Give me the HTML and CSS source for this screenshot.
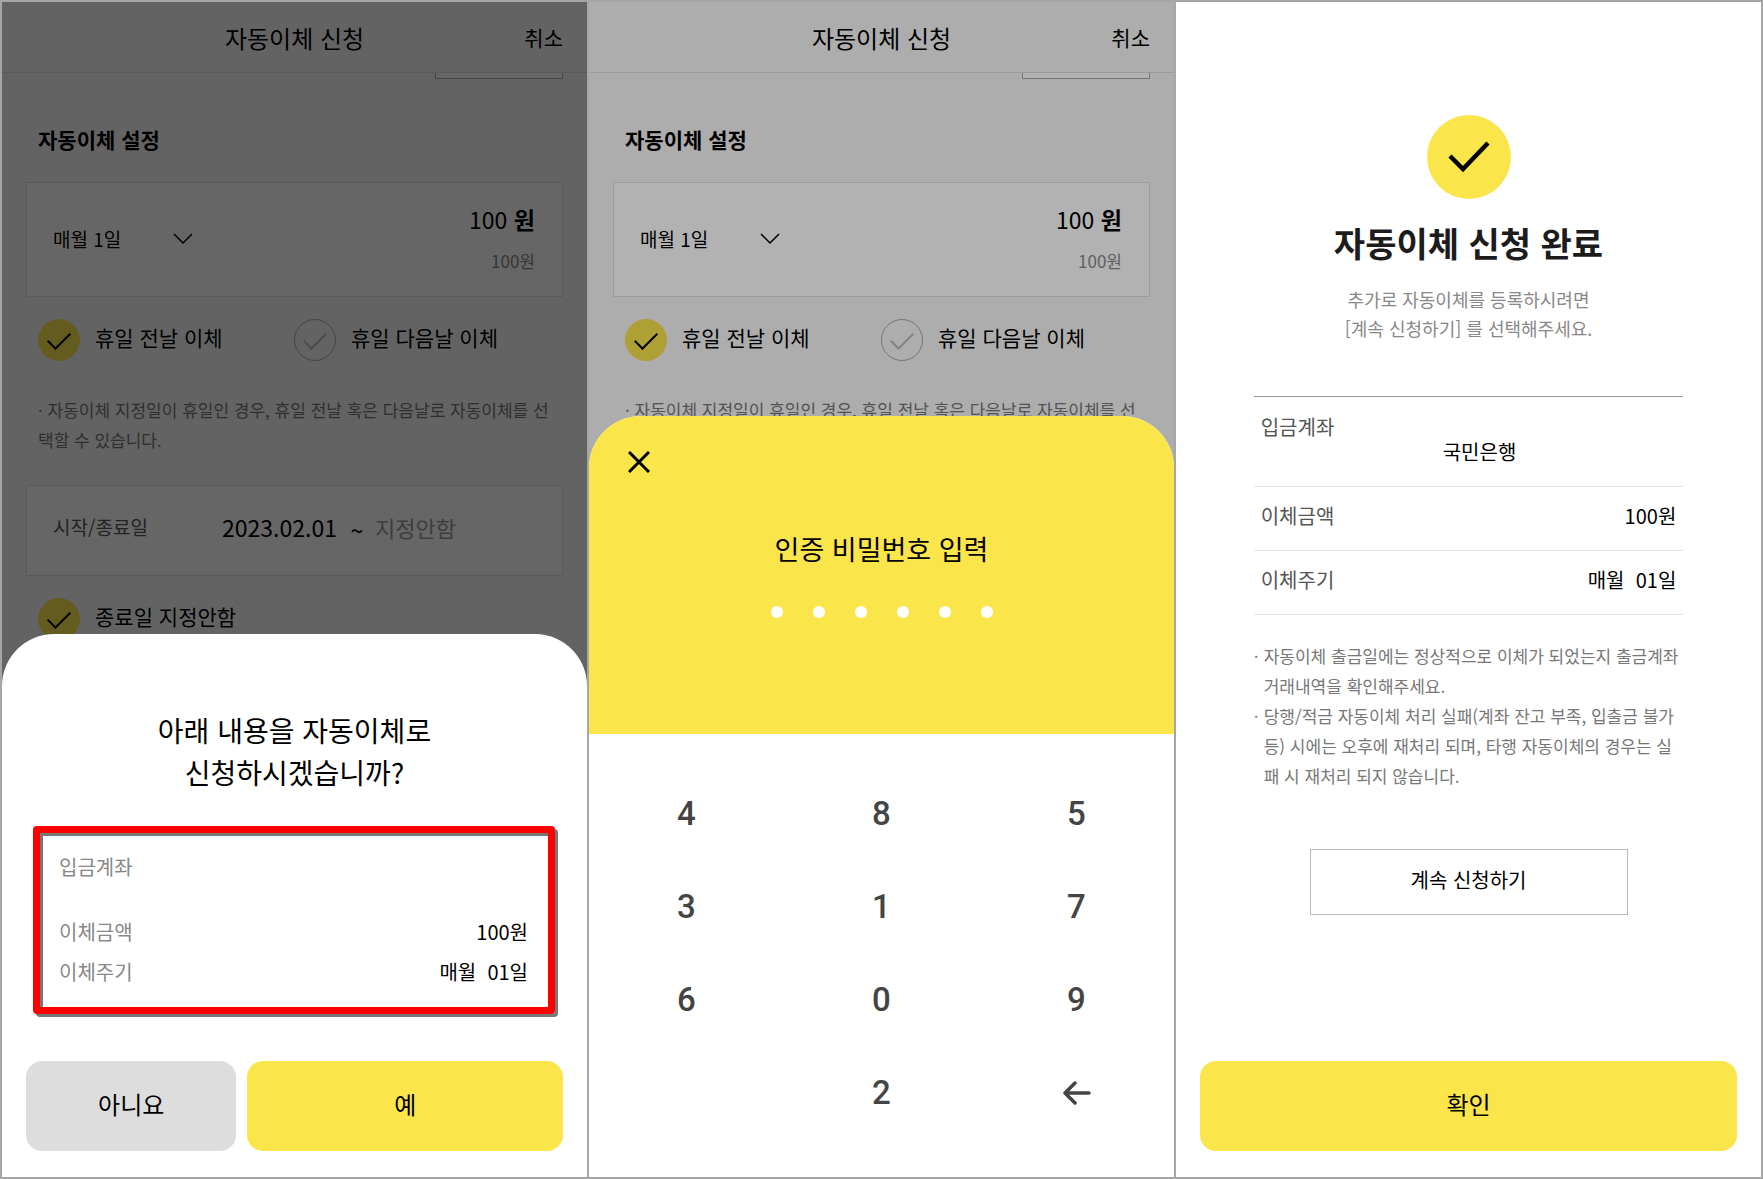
FILE: index.html
```html
<!DOCTYPE html>
<html lang="ko">
<head>
    <meta charset="UTF-8">
    <meta name="viewport" content="width=device-width, initial-scale=1.0">
    <title>자동이체 신청</title>
    <link rel="stylesheet" href="styles.css">
</head>
<body>
    <div class="screens">
        <!-- 신청 내용 확인 -->
        <section class="screen">
            <header class="top-bar">
                <h1>자동이체 신청</h1>
                <a href="#" class="cancel">취소</a>
            </header>
            <form class="transfer-form">
                <div class="scrolled-field"></div>
                <h2>자동이체 설정</h2>
                <div class="box amount-box">
                    <div class="day-select">
                        <select aria-label="이체일">
                            <option>매월 1일</option>
                        </select>
                        <svg width="20" height="12" viewBox="0 0 20 12"><path d="M1 1l9 9 9-9" fill="none" stroke="#000" stroke-width="1.5"/></svg>
                    </div>
                    <div class="amount">
                        <label class="amount-input"><input type="text" value="100" aria-label="이체금액"> <b>원</b></label>
                        <span class="amount-hint">100원</span>
                    </div>
                </div>
                <div class="options">
                    <label class="option"><input type="radio" name="holiday" checked>휴일 전날 이체</label>
                    <label class="option"><input type="radio" name="holiday">휴일 다음날 이체</label>
                </div>
                <p class="note">· 자동이체 지정일이 휴일인 경우, 휴일 전날 혹은 다음날로 자동이체를 선택할 수 있습니다.</p>
                <div class="box date-box">
                    <label for="start-date">시작/종료일</label>
                    <input type="text" id="start-date" value="2023.02.01">
                    <span class="tilde">~</span>
                    <input type="text" class="end-date" placeholder="지정안함" aria-label="종료일">
                </div>
                <div class="options">
                    <label class="option"><input type="checkbox" checked>종료일 지정안함</label>
                </div>
            </form>
            <div class="dim"></div>
            <div class="sheet confirm-sheet">
                <p class="sheet-title">아래 내용을 자동이체로<br>신청하시겠습니까?</p>
                <dl class="summary">
                    <div class="summary-item account">
                        <dt>입금계좌</dt>
                        <dd></dd>
                    </div>
                    <div class="summary-item">
                        <dt>이체금액</dt>
                        <dd>100원</dd>
                    </div>
                    <div class="summary-item">
                        <dt>이체주기</dt>
                        <dd>매월&nbsp; 01일</dd>
                    </div>
                </dl>
                <div class="buttons">
                    <button type="button" class="btn btn-no">아니요</button>
                    <button type="button" class="btn btn-yes">예</button>
                </div>
            </div>
        </section>

        <!-- 비밀번호 입력 -->
        <section class="screen">
            <header class="top-bar">
                <h1>자동이체 신청</h1>
                <a href="#" class="cancel">취소</a>
            </header>
            <form class="transfer-form">
                <div class="scrolled-field"></div>
                <h2>자동이체 설정</h2>
                <div class="box amount-box">
                    <div class="day-select">
                        <select aria-label="이체일">
                            <option>매월 1일</option>
                        </select>
                        <svg width="20" height="12" viewBox="0 0 20 12"><path d="M1 1l9 9 9-9" fill="none" stroke="#000" stroke-width="1.5"/></svg>
                    </div>
                    <div class="amount">
                        <label class="amount-input"><input type="text" value="100" aria-label="이체금액"> <b>원</b></label>
                        <span class="amount-hint">100원</span>
                    </div>
                </div>
                <div class="options">
                    <label class="option"><input type="radio" name="holiday" checked>휴일 전날 이체</label>
                    <label class="option"><input type="radio" name="holiday">휴일 다음날 이체</label>
                </div>
                <p class="note">· 자동이체 지정일이 휴일인 경우, 휴일 전날 혹은 다음날로 자동이체를 선택할 수 있습니다.</p>
            </form>
            <div class="dim dim-light"></div>
            <div class="sheet password-sheet">
                <div class="password">
                    <button type="button" class="close" aria-label="닫기">
                        <svg width="22" height="22" viewBox="0 0 22 22"><path d="M1 1l20 20M21 1L1 21" stroke="#000" stroke-width="3"/></svg>
                    </button>
                    <p class="password-title">인증 비밀번호 입력</p>
                    <div class="dots">
                        <i></i><i></i><i></i><i></i><i></i><i></i>
                    </div>
                </div>
                <div class="keypad">
                    <button type="button">4</button>
                    <button type="button">8</button>
                    <button type="button">5</button>
                    <button type="button">3</button>
                    <button type="button">1</button>
                    <button type="button">7</button>
                    <button type="button">6</button>
                    <button type="button">0</button>
                    <button type="button">9</button>
                    <span></span>
                    <button type="button">2</button>
                    <button type="button" aria-label="지우기">
                        <svg width="28" height="24" viewBox="0 0 28 24"><path d="M26 12H3M12 2L2 12l10 10" fill="none" stroke="#444" stroke-width="3.5" stroke-linecap="round" stroke-linejoin="round"/></svg>
                    </button>
                </div>
            </div>
        </section>

        <!-- 신청 완료 -->
        <section class="screen done">
            <svg class="done-icon" width="84" height="84" viewBox="0 0 84 84">
                <circle cx="42" cy="42" r="42" fill="#fae54b"/>
                <path d="M23 41l13 13 25-26" fill="none" stroke="#000" stroke-width="4.5"/>
            </svg>
            <h2 class="done-title">자동이체 신청 완료</h2>
            <p class="done-text">추가로 자동이체를 등록하시려면<br>[계속 신청하기] 를 선택해주세요.</p>
            <table class="result">
                <tr class="account">
                    <th scope="row">입금계좌</th>
                    <td>국민은행</td>
                </tr>
                <tr>
                    <th scope="row">이체금액</th>
                    <td>100원</td>
                </tr>
                <tr>
                    <th scope="row">이체주기</th>
                    <td>매월&nbsp; 01일</td>
                </tr>
            </table>
            <ul class="guide">
                <li>자동이체 출금일에는 정상적으로 이체가 되었는지 출금계좌 거래내역을 확인해주세요.</li>
                <li>당행/적금 자동이체 처리 실패(계좌 잔고 부족, 입출금 불가 등) 시에는 오후에 재처리 되며, 타행 자동이체의 경우는 실패 시 재처리 되지 않습니다.</li>
            </ul>
            <button type="button" class="more">계속 신청하기</button>
            <button type="button" class="btn btn-yes btn-confirm">확인</button>
        </section>
    </div>
</body>
</html>
```

FILE: styles.css
```css
* {
    box-sizing: border-box;
}

body {
    margin: 0;
    font-family: 'Noto Sans CJK KR', sans-serif;
    font-size: 20px;
    color: #000;
    background: #a6a6a6;
}

h1, h2, p, dl, dd, ul {
    margin: 0;
    padding: 0;
}

button, input, select {
    font: inherit;
    color: inherit;
    padding: 0;
    border: none;
    background: none;
}

.screens {
    display: grid;
    grid-template-columns: repeat(3, 1fr);
    gap: 2px;
    padding: 2px;
    min-height: 100vh;
}

.screen {
    position: relative;
    overflow: hidden;
    background: #f8f8f8;
}

/* 상단바 */
.top-bar {
    display: grid;
    grid-template-columns: 1fr auto 1fr;
    align-items: center;
    height: 71px;
    padding: 0 24px;
    border-bottom: 1px solid #dedede;
}

.top-bar h1 {
    grid-column: 2;
    font-size: 24px;
    font-weight: 400;
}

.cancel {
    justify-self: end;
    font-size: 21px;
    color: #000;
    text-decoration: none;
}

/* 신청 폼 */
.transfer-form {
    padding: 0 24px;
}

.scrolled-field {
    width: 128px;
    height: 6px;
    margin-left: auto;
    background: #fff;
    border: 1px solid #aaa;
    border-top: none;
}

.transfer-form h2 {
    margin: 44px 12px 27px;
    font-size: 21px;
    line-height: 32px;
}

.box {
    display: flex;
    align-items: center;
    padding: 0 27px 0 26px;
    background: #fff;
    border: 1px solid #dedede;
}

.amount-box {
    justify-content: space-between;
    height: 115px;
    padding-bottom: 2px;
}

.day-select {
    display: flex;
    align-items: center;
}

.day-select select {
    width: 120px;
    font-size: 19px;
    appearance: none;
}

.amount {
    text-align: right;
}

.amount-input {
    display: block;
    font-size: 23px;
    line-height: 44px;
}

.amount-input input {
    width: 80px;
    text-align: right;
}

.amount-hint {
    display: block;
    font-size: 17px;
    line-height: 40px;
    color: #888;
}

.options {
    display: grid;
    grid-template-columns: 256px 1fr;
    margin: 22px 12px 0;
}

.option {
    display: flex;
    align-items: flex-start;
    gap: 15px;
    font-size: 21px;
    line-height: 36px;
}

.option input {
    display: flex;
    justify-content: center;
    width: 42px;
    height: 42px;
    margin: 0;
    border: 1px solid #aaa;
    border-radius: 50%;
    appearance: none;
}

.option input::after {
    content: '';
    width: 10px;
    height: 20px;
    margin-top: 7px;
    border: solid #bbb;
    border-width: 0 2px 2px 0;
    transform: rotate(45deg);
}

.option input:checked {
    border-color: #fae54b;
    background: #fae54b;
}

.option input:checked::after {
    border-color: #000;
}

.note {
    margin: 34px 12px 30px;
    font-size: 17px;
    line-height: 30px;
    color: #777;
}

.date-box {
    height: 91px;
    padding-bottom: 8px;
    font-size: 23px;
}

.date-box label {
    width: 169px;
    font-size: 19px;
    color: #555;
}

.date-box input {
    width: 117px;
}

.tilde {
    width: 36px;
    padding-top: 6px;
    text-align: center;
}

.date-box .end-date {
    width: 140px;
    font-size: 22px;
}

.date-box .end-date::placeholder {
    color: #999;
}

/* 하단 시트 */
.dim {
    position: absolute;
    inset: 0;
    background: rgba(0, 0, 0, 0.6);
}

.dim-light {
    background: rgba(0, 0, 0, 0.3);
}

.sheet {
    position: absolute;
    left: 0;
    right: 0;
    bottom: 0;
    overflow: hidden;
    background: #fff;
    border-radius: 52px 52px 0 0;
}

.confirm-sheet {
    padding: 75px 24px 26px;
}

.sheet-title {
    font-size: 28px;
    line-height: 42px;
    text-align: center;
}

.summary {
    margin: 33px 8px 47px 7px;
    padding: 14px 20px 15px 19px;
    border: 7px solid #f00;
    border-radius: 4px;
    box-shadow: 3px 3px 0 #777, inset 3px 3px 0 #777;
}

.summary-item {
    display: flex;
    justify-content: space-between;
    line-height: 40px;
}

.summary-item.account {
    margin-bottom: 25px;
}

.summary-item dt {
    color: #888;
}

.buttons {
    display: grid;
    grid-template-columns: 2fr 3fr;
    gap: 11px;
}

.btn {
    height: 90px;
    padding-bottom: 6px;
    font-size: 24px;
    border-radius: 16px;
    cursor: pointer;
}

.btn-no {
    background: #ddd;
}

.btn-yes {
    background: #fae54b;
}

/* 비밀번호 */
.password {
    height: 318px;
    padding: 35px 39px 0;
    background: #fae54b;
}

.close {
    display: block;
    height: 22px;
}

.close svg,
.keypad svg {
    display: block;
    margin: auto;
}

.password-title {
    margin: 56px 0 37px;
    font-size: 27px;
    line-height: 40px;
    text-align: center;
}

.dots {
    display: flex;
    justify-content: center;
    gap: 30px;
}

.dots i {
    width: 12px;
    height: 12px;
    border-radius: 50%;
    background: #fff;
}

.keypad {
    display: grid;
    grid-template-columns: repeat(3, 1fr);
    grid-auto-rows: 93px;
    padding: 33px 0 38px;
    font-family: Roboto, sans-serif;
    font-size: 33px;
    font-weight: 500;
    color: #444;
}

/* 완료 화면 */
.done {
    display: flex;
    flex-direction: column;
    align-items: center;
    padding: 113px 24px 26px;
    background: #fff;
}

.done-title {
    margin-top: 19px;
    font-size: 34px;
    line-height: 50px;
    color: #1c1c1c;
}

.done-text {
    margin-top: 17px;
    font-size: 18px;
    line-height: 29px;
    color: #888;
    text-align: center;
}

.result {
    width: 80%;
    margin-top: 53px;
    border-collapse: collapse;
    border-top: 1px solid #999;
}

.result tr {
    height: 64px;
    border-bottom: 1px solid #e4e4e4;
}

.result .account {
    height: 90px;
}

.result th {
    width: 44%;
    padding: 0 7px 6px;
    font-weight: 400;
    text-align: left;
    color: #555;
}

.result td {
    padding: 0 7px 6px 0;
    text-align: right;
}

.result .account th {
    padding-bottom: 30px;
}

.result .account td {
    padding: 20px 0 0;
    text-align: left;
}

.guide {
    width: 80%;
    margin-top: 26px;
    font-size: 17px;
    line-height: 30px;
    color: #777;
    list-style: none;
}

.guide li {
    position: relative;
    padding-left: 10px;
}

.guide li::before {
    content: '·';
    position: absolute;
    left: 0;
}

.more {
    width: 318px;
    height: 66px;
    margin: 58px 0 40px;
    padding-bottom: 5px;
    border: 1px solid #b8b8b8;
    cursor: pointer;
}

.btn-confirm {
    width: 100%;
    margin-top: auto;
}
```
